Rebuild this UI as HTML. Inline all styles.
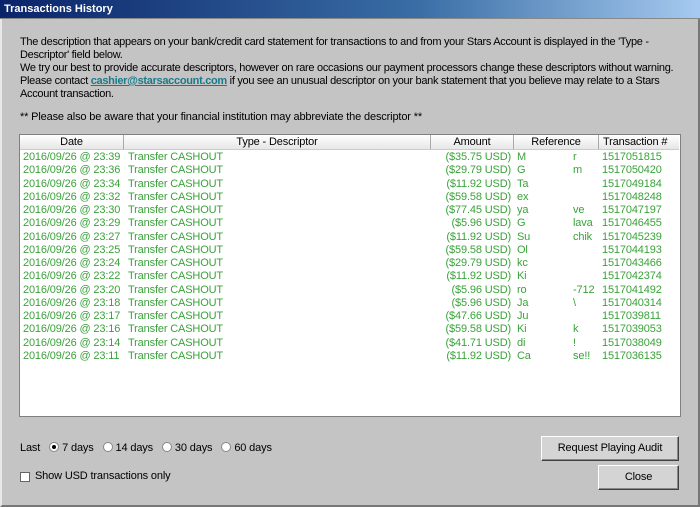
<!DOCTYPE html>
<html><head><style>
*{margin:0;padding:0;box-sizing:border-box}
body{width:700px;height:507px;background:#c4c4c4;font-family:"Liberation Sans",sans-serif;font-size:11px;color:#000;position:relative;overflow:hidden;letter-spacing:-0.15px}
.title{position:absolute;left:0;top:0;width:700px;height:19px;background:linear-gradient(90deg,#0a246a,#3a6ea5 60%,#a6caf0);color:#fff;font-weight:bold;font-size:11px;padding:3px 4px;border-bottom:1px solid #888;letter-spacing:0}
.frame{position:absolute;left:0;top:19px;width:700px;height:488px;border-left:2px solid #e8e8e8;border-right:2px solid #777;border-bottom:2px solid #777}
.intro{position:absolute;left:20px;top:36px;width:672px;line-height:13px;letter-spacing:-0.3px}
.intro a{color:#1a7a8a;font-weight:bold;text-decoration:underline}
.note{position:absolute;left:20px;top:111px}
.table{position:absolute;left:19px;top:134px;width:662px;height:283px;background:#fff;border:1px solid #808080}
.hdr{position:absolute;top:0;height:15px;background:linear-gradient(#fff,#e6e6e6);border-right:1px solid #aaa;border-bottom:1px solid #ccc;text-align:center;line-height:14px}
.col{position:absolute;top:16px;line-height:13.27px;color:#3aa23a;white-space:pre}
.r{text-align:right}
.bottom{position:absolute;top:442px;left:20px}
.radio{display:inline-block;width:10px;height:10px;border-radius:50%;background:#fff;border:1px solid #888;vertical-align:-1px;margin:0 3px 0 6px;position:relative}
.radio.on::after{content:"";position:absolute;left:2px;top:2px;width:4px;height:4px;border-radius:50%;background:#000}
.chk{position:absolute;left:20px;top:472px;width:10px;height:10px;background:#fff;border:1px solid #666}
.btn{position:absolute;background:#d4d4d4;border:1px solid #fff;border-right-color:#404040;border-bottom-color:#404040;box-shadow:inset -1px -1px #888;text-align:center}
</style></head><body>
<div class="title">Transactions History</div>
<div class="frame"></div>
<div class="intro">The description that appears on your bank/credit card statement for transactions to and from your Stars Account is displayed in the 'Type - Descriptor' field below.<br>We try our best to provide accurate descriptors, however on rare occasions our payment processors change these descriptors without warning.<br>Please contact <a>cashier@starsaccount.com</a> if you see an unusual descriptor on your bank statement that you believe may relate to a Stars Account transaction.</div>
<div class="note">** Please also be aware that your financial institution may abbreviate the descriptor **</div>
<div class="table">
<div class="hdr" style="left:0;width:104px">Date</div>
<div class="hdr" style="left:104px;width:307px">Type - Descriptor</div>
<div class="hdr" style="left:411px;width:83px">Amount</div>
<div class="hdr" style="left:494px;width:85px">Reference</div>
<div class="hdr" style="left:579px;width:80px;border-right:none;text-align:left;padding-left:4px">Transaction #</div>
<div class="col" style="left:3px">2016/09/26 @ 23:39
2016/09/26 @ 23:36
2016/09/26 @ 23:34
2016/09/26 @ 23:32
2016/09/26 @ 23:30
2016/09/26 @ 23:29
2016/09/26 @ 23:27
2016/09/26 @ 23:25
2016/09/26 @ 23:24
2016/09/26 @ 23:22
2016/09/26 @ 23:20
2016/09/26 @ 23:18
2016/09/26 @ 23:17
2016/09/26 @ 23:16
2016/09/26 @ 23:14
2016/09/26 @ 23:11</div>
<div class="col" style="left:108px">Transfer CASHOUT
Transfer CASHOUT
Transfer CASHOUT
Transfer CASHOUT
Transfer CASHOUT
Transfer CASHOUT
Transfer CASHOUT
Transfer CASHOUT
Transfer CASHOUT
Transfer CASHOUT
Transfer CASHOUT
Transfer CASHOUT
Transfer CASHOUT
Transfer CASHOUT
Transfer CASHOUT
Transfer CASHOUT</div>
<div class="col r" style="left:411px;width:80px">($35.75 USD)
($29.79 USD)
($11.92 USD)
($59.58 USD)
($77.45 USD)
($5.96 USD)
($11.92 USD)
($59.58 USD)
($29.79 USD)
($11.92 USD)
($5.96 USD)
($5.96 USD)
($47.66 USD)
($59.58 USD)
($41.71 USD)
($11.92 USD)</div>
<div class="col" style="left:497px">M
G
Ta
ex
ya
G
Su
Ol
kc
Ki
ro
Ja
Ju
Ki
di
Ca</div>
<div class="col" style="left:553px">r
m

 
ve
lava
chik



-712
\

k
!
se!!</div>
<div class="col" style="left:582px">1517051815
1517050420
1517049184
1517048248
1517047197
1517046455
1517045239
1517044193
1517043466
1517042374
1517041492
1517040314
1517039811
1517039053
1517038049
1517036135</div>
</div>
<div class="bottom">Last <span class="radio on"></span>7 days <span class="radio"></span>14 days <span class="radio"></span>30 days <span class="radio"></span>60 days</div>
<div class="chk"></div>
<div style="position:absolute;left:35px;top:470px">Show USD transactions only</div>
<div class="btn" style="left:541px;top:436px;width:138px;height:25px;line-height:23px">Request Playing Audit</div>
<div class="btn" style="left:598px;top:465px;width:81px;height:25px;line-height:23px">Close</div>
</body></html>
